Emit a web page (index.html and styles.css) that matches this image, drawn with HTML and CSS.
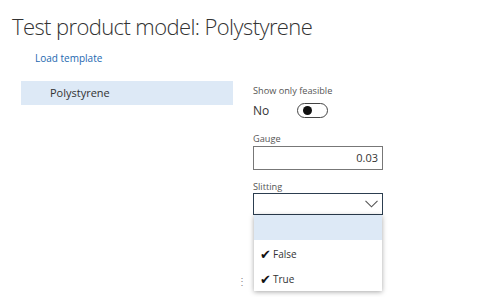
FILE: index.html
```html
<!DOCTYPE html>
<html lang="en">
<head>
    <meta charset="UTF-8">
    <title>Test product model: Polystyrene</title>
    <link rel="stylesheet" href="styles.css">
</head>
<body>
    <h1 class="title">Test product model: Polystyrene</h1>
    <a class="load-link" href="#">Load template</a>

    <div class="content">
        <div class="list">
            <div class="list-item selected">Polystyrene</div>
        </div>

        <div class="side">
            <span class="dots">&#8942;</span>
            <div class="fields">
                <div class="field">
                    <label class="field-label">Show only feasible</label>
                    <div class="toggle-row">
                        <span class="toggle-text">No</span>
                        <span class="toggle"><span class="knob"></span></span>
                    </div>
                </div>

                <div class="field">
                    <label class="field-label">Gauge</label>
                    <div class="input">0.03</div>
                </div>

                <div class="field">
                    <label class="field-label">Slitting</label>
                    <div class="select">
                        <svg class="chevron" width="13" height="8" viewBox="0 0 13 8">
                            <path d="M0.5 0.8 L6.5 6.8 L12.5 0.8" fill="none" stroke="#555" stroke-width="1.1"/>
                        </svg>
                    </div>
                    <div class="dropdown">
                        <div class="option active"></div>
                        <div class="option"><span class="check">&#10004;</span>False</div>
                        <div class="option"><span class="check">&#10004;</span>True</div>
                    </div>
                </div>
            </div>
        </div>
    </div>
</body>
</html>
```

FILE: styles.css
```css
body {
    margin: 0;
    padding: 0;
    background: #fff;
    font-family: "Open Sans", "Noto Sans", sans-serif;
    color: #333;
    overflow: hidden;
}

.title {
    font-weight: 300;
    font-size: 22px;
    color: #333;
    margin: 0;
    padding: 11px 0 0 12px;
    height: 35px;
    line-height: 30px;
    letter-spacing: -0.6px;
}

.load-link {
    display: block;
    margin: 5px 0 0 35px;
    font-size: 10px;
    color: #2468b0;
    text-decoration: none;
    line-height: 14px;
}

.content {
    display: flex;
    margin-top: 16px;
}

.list {
    width: 212px;
    margin-left: 21px;
}

.list-item {
    height: 24px;
    line-height: 24px;
    padding-left: 29px;
    font-size: 11px;
    color: #333;
}

.list-item.selected {
    background: #dde9f6;
}

.side {
    display: flex;
    margin-left: 4px;
}

.dots {
    width: 16px;
    font-size: 10px;
    line-height: 12px;
    color: #888;
    align-self: flex-end;
    margin-bottom: 13px;
}

.fields {
    width: 130px;
    padding-top: 3px;
}

.field {
    margin-bottom: 9px;
}

.field-label {
    display: block;
    font-size: 9.2px;
    color: #555;
    line-height: 13px;
}

.toggle-row {
    display: flex;
    align-items: center;
    height: 26px;
}

.toggle-text {
    font-size: 12px;
    color: #333;
    width: 44px;
}

.toggle {
    width: 24px;
    height: 13px;
    border: 1.5px solid #444;
    border-radius: 9px;
    display: flex;
    align-items: center;
    padding-left: 5px;
    box-sizing: content-box;
}

.knob {
    width: 9px;
    height: 9px;
    background: #111;
    border-radius: 50%;
}

.input {
    margin-top: 1px;
    height: 22px;
    border: 1px solid #777;
    font-size: 11px;
    line-height: 22px;
    text-align: right;
    padding-right: 4px;
    color: #333;
}

.field:nth-child(2) {
    margin-bottom: 10px;
}

.select {
    height: 20px;
    border: 1.5px solid #2c3e50;
    display: flex;
    align-items: center;
    justify-content: flex-end;
    padding-right: 4px;
}

.dropdown {
    margin: 0 1px;
    background: #fff;
    box-shadow: 0 1px 5px rgba(0, 0, 0, 0.35);
    padding-bottom: 1px;
}

.option {
    height: 25px;
    display: flex;
    align-items: center;
    padding: 2px 0 0 6px;
    box-sizing: border-box;
    font-size: 10px;
    color: #333;
}

.option.active {
    background: #dde9f6;
    padding-top: 0;
}

.check {
    font-size: 13px;
    margin-right: 2px;
    color: #111;
}
```
